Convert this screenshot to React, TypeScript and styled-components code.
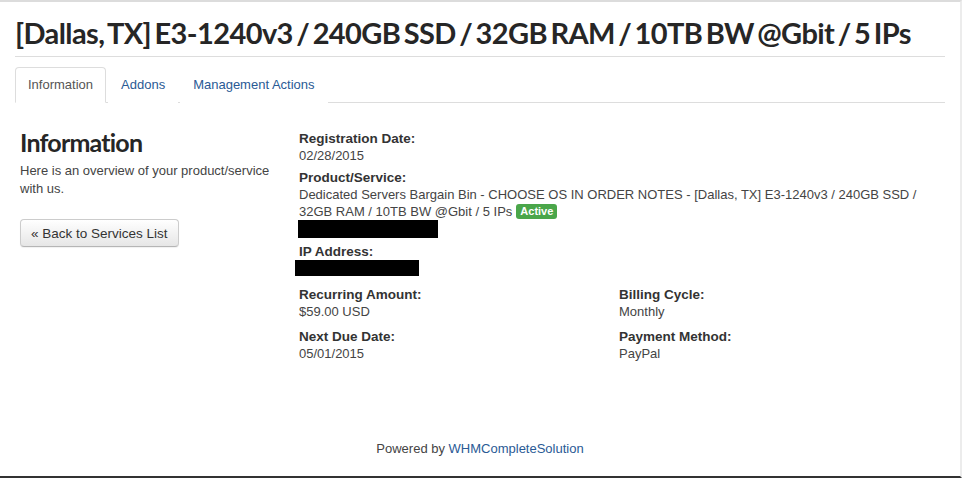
import React from "react";
import styled, { createGlobalStyle } from "styled-components";

const Global = createGlobalStyle`
  html, body { margin: 0; padding: 0; background: #fff; }
  body { font-family: "Liberation Sans", Arial, sans-serif; font-size: 13px; color: #333; }
  * { box-sizing: border-box; }
`;

const Frame = styled.div`
  height: 478px;
  border-top: 2px solid #dcdcdc;
  border-right: 2px solid #ececec;
  border-bottom: 2px solid #333;
  display: flex;
  flex-direction: column;
  overflow: hidden;
`;

const Container = styled.div`
  padding: 0 15px;
  flex: 1;
  display: flex;
  flex-direction: column;
`;

const Title = styled.h1`
  margin: 14px 0 0;
  padding-bottom: 6px;
  font-family: "Lato", "Open Sans", sans-serif;
  font-weight: 700;
  font-size: 29px;
  line-height: 34px;
  color: #262626;
  letter-spacing: -0.6px;
  word-spacing: -3px;
  white-space: nowrap;
  border-bottom: 1px solid #ddd;
`;

const Tabs = styled.ul`
  list-style: none;
  margin: 10px 0 0;
  padding: 0;
  display: flex;
  border-bottom: 1px solid #ddd;
`;

const Tab = styled.li<{ $active?: boolean }>`
  margin-bottom: -1px;
  padding: 9px 12px 9px;
  line-height: 16px;
  font-size: 13px;
  color: ${(p) => (p.$active ? "#555" : "#2a5a95")};
  background: #fff;
  border: 1px solid ${(p) => (p.$active ? "#ddd" : "transparent")};
  border-bottom-color: ${(p) => (p.$active ? "#fff" : "transparent")};
  border-radius: 4px 4px 0 0;
  margin-right: 2px;
`;

const Body = styled.div`
  display: grid;
  grid-template-columns: 279px 1fr;
  padding: 24px 0 0 5px;
`;

const Side = styled.div`
  display: flex;
  flex-direction: column;
  align-items: flex-start;
`;

const SideTitle = styled.h2`
  margin: 0;
  font-family: "Lato", "Open Sans", sans-serif;
  font-weight: 700;
  font-size: 25px;
  line-height: 30px;
  letter-spacing: -0.8px;
  color: #262626;
`;

const SideText = styled.p`
  margin: 5px 0 0;
  line-height: 18px;
  color: #444;
  width: 260px;
`;

const BackButton = styled.button`
  margin-top: 21px;
  font-family: "Liberation Sans", Arial, sans-serif;
  font-size: 13.5px;
  color: #333;
  height: 28px;
  padding: 0 10px;
  border: 1px solid #ccc;
  border-bottom-color: #b5b5b5;
  border-radius: 4px;
  background: linear-gradient(#fff, #e6e6e6);
  box-shadow: 0 1px 1px rgba(0,0,0,0.06);
`;

const Details = styled.div`
  display: flex;
  flex-direction: column;
  padding-top: 3px;
`;

const Field = styled.div<{ $gap?: number }>`
  margin-bottom: ${(p) => (p.$gap ?? 5)}px;
`;

const Label = styled.div`
  font-weight: 700;
  font-size: 13.5px;
  line-height: 17px;
  color: #333;
`;

const Value = styled.div`
  line-height: 17px;
  color: #444;
`;

const Redacted = styled.div<{ $w: number; $h: number; $x: number }>`
  background: #000;
  width: ${(p) => p.$w}px;
  height: ${(p) => p.$h}px;
  margin-left: ${(p) => p.$x}px;
`;

const Badge = styled.span`
  display: inline-block;
  background: #4aa64a;
  color: #fff;
  font-weight: 700;
  font-size: 11px;
  line-height: 15px;
  padding: 0 4px;
  border-radius: 3px;
  margin-left: 4px;
  vertical-align: top;
  margin-top: 1px;
`;

const Pair = styled.div`
  display: grid;
  grid-template-columns: 320px 1fr;
  margin-top: 5px;
`;

const Footer = styled.div`
  margin-top: auto;
  padding-bottom: 20px;
  text-align: center;
  color: #444;
`;

const FootLink = styled.a`
  color: #2a5a95;
  text-decoration: none;
`;

export default function App() {
  return (
    <>
      <Global />
      <Frame>
        <Container>
          <Title>[Dallas, TX] E3-1240v3 / 240GB SSD / 32GB RAM / 10TB BW @Gbit / 5 IPs</Title>
          <Tabs>
            <Tab $active>Information</Tab>
            <Tab>Addons</Tab>
            <Tab>Management Actions</Tab>
          </Tabs>
          <Body>
            <Side>
              <SideTitle>Information</SideTitle>
              <SideText>Here is an overview of your product/service with us.</SideText>
              <BackButton>« Back to Services List</BackButton>
            </Side>
            <Details>
              <Field>
                <Label>Registration Date:</Label>
                <Value>02/28/2015</Value>
              </Field>
              <Field>
                <Label>Product/Service:</Label>
                <Value>
                  Dedicated Servers Bargain Bin - CHOOSE OS IN ORDER NOTES - [Dallas, TX] E3-1240v3 / 240GB SSD / 32GB RAM / 10TB BW @Gbit / 5 IPs
                  <Badge>Active</Badge>
                </Value>
                <Redacted $w={140} $h={18} $x={-1} />
              </Field>
              <Field>
                <Label>IP Address:</Label>
                <Redacted $w={124} $h={16} $x={-4} />
              </Field>
              <Pair>
                <Field $gap={8}>
                  <Label>Recurring Amount:</Label>
                  <Value>$59.00 USD</Value>
                </Field>
                <Field $gap={8}>
                  <Label>Billing Cycle:</Label>
                  <Value>Monthly</Value>
                </Field>
                <Field $gap={8}>
                  <Label>Next Due Date:</Label>
                  <Value>05/01/2015</Value>
                </Field>
                <Field $gap={8}>
                  <Label>Payment Method:</Label>
                  <Value>PayPal</Value>
                </Field>
              </Pair>
            </Details>
          </Body>
          <Footer>
            Powered by <FootLink href="#">WHMCompleteSolution</FootLink>
          </Footer>
        </Container>
      </Frame>
    </>
  );
}
